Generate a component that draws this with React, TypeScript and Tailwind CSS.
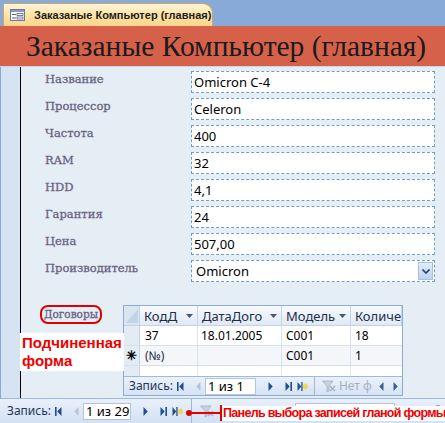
import React from "react";

const fields = [
  { label: "Название", value: "Omicron C-4" },
  { label: "Процессор", value: "Celeron" },
  { label: "Частота", value: "400" },
  { label: "RAM", value: "32" },
  { label: "HDD", value: "4,1" },
  { label: "Гарантия", value: "24" },
  { label: "Цена", value: "507,00" },
];

const cols = [
  { title: "КодД", w: "w-[58px]" },
  { title: "ДатаДого", w: "w-[84px]" },
  { title: "Модель", w: "w-[69px]" },
  { title: "Количе", w: "w-[51px]", noArrow: true },
];

const labelFont = { fontFamily: '"DejaVu Serif", "Liberation Serif", serif' };

function FormIcon() {
  return (
    <svg width="15" height="12" viewBox="0 0 15 12">
      <rect x="0.5" y="0.5" width="14" height="11" fill="#fff" stroke="#6a76a3" />
      <rect x="1" y="1" width="13" height="2" fill="#8e97c4" />
      <rect x="2" y="5" width="4" height="1" fill="#55608f" />
      <rect x="7" y="4.5" width="6" height="2" fill="#fff" stroke="#55608f" strokeWidth="0.8" />
      <rect x="2" y="8.5" width="4" height="1" fill="#55608f" />
      <rect x="7" y="8" width="6" height="2" fill="#fff" stroke="#55608f" strokeWidth="0.8" />
    </svg>
  );
}

function First() {
  return (
    <svg width="7" height="9" viewBox="0 0 7 9">
      <rect x="0" y="0" width="1.6" height="9" fill="#1f4f93" />
      <polygon points="6.5,0 2.2,4.5 6.5,9" fill="#1f4f93" />
    </svg>
  );
}

function Prev({ c = "#b7c4d6" }: { c?: string }) {
  return (
    <svg width="5" height="9" viewBox="0 0 5 9">
      <polygon points="4.5,0 0.3,4.5 4.5,9" fill={c} />
    </svg>
  );
}

function Next({ c = "#1f4f93" }: { c?: string }) {
  return (
    <svg width="5" height="9" viewBox="0 0 5 9">
      <polygon points="0.5,0 4.7,4.5 0.5,9" fill={c} />
    </svg>
  );
}

function Last() {
  return (
    <svg width="7" height="9" viewBox="0 0 7 9">
      <polygon points="0.5,0 4.7,4.5 0.5,9" fill="#1f4f93" />
      <rect x="5.4" y="0" width="1.6" height="9" fill="#1f4f93" />
    </svg>
  );
}

function NewRec() {
  return (
    <svg width="11" height="9" viewBox="0 0 11 9">
      <polygon points="0.5,0 4.3,4.5 0.5,9" fill="#1f4f93" />
      <rect x="4.3" y="0" width="1.3" height="9" fill="#1f4f93" />
      <rect x="6.5" y="2.5" width="4" height="4" fill="#f2c230" />
      <rect x="7.5" y="1.5" width="2" height="6" fill="#f7d55c" />
      <rect x="5.8" y="3.5" width="5.2" height="2" fill="#f7d55c" />
    </svg>
  );
}

function Funnel() {
  return (
    <svg width="15" height="13" viewBox="0 0 15 13">
      <polygon points="0.5,1 11,1 7,6 7,11 5,12 5,6" fill="#c8d2de" stroke="#a3afbf" strokeWidth="0.8" />
      <path d="M8 6 L13 11 M13 6 L8 11" stroke="#a9b3c2" strokeWidth="1.6" />
    </svg>
  );
}

function HeadArrow() {
  return (
    <svg width="7" height="4" viewBox="0 0 7 4" className="shrink-0">
      <polygon points="0,0 7,0 3.5,4" fill="#4b5870" />
    </svg>
  );
}

function NavBar({ text, boxW }: { text: string; boxW: string }) {
  return (
    <div className="flex items-center text-[12px] leading-none text-[#26385a] whitespace-nowrap shrink-0">
      <span className="mr-[4px]">Запись:</span>
      <First />
      <span className="ml-[12px] mr-[4px]">
        <Prev />
      </span>
      <div className={`${boxW} h-[17px] bg-white border border-[#b3c5dc] flex items-center pl-[2px] text-[13px] text-black`}>
        {text}
      </div>
      <span className="ml-[12px]">
        <Next />
      </span>
      <span className="ml-[12px]">
        <Last />
      </span>
      <span className="ml-[5px]">
        <NewRec />
      </span>
    </div>
  );
}

export default function App() {
  return (
    <div
      className="relative w-[445px] h-[423px] overflow-hidden bg-[#e5edf5] flex flex-col"
      style={{ fontFamily: '"Noto Sans", "Liberation Sans", sans-serif' }}
    >
      {/* tab strip */}
      <div className="h-[26px] bg-[#88aad8] flex items-end pl-[3px] shrink-0">
        <div className="h-[23px] w-[210px] rounded-tr-[10px] rounded-tl-[2px] border border-b-0 border-[#c9a86a] bg-gradient-to-b from-[#fff4d6] via-[#fde3a6] to-[#fbd58a] flex items-center pl-[6px] gap-[9px]">
          <FormIcon />
          <span className="text-[11px] font-bold text-[#1c1c1c] leading-none" style={{ fontFamily: '"Liberation Sans", sans-serif' }}>
            Заказаные Компьютер (главная)
          </span>
        </div>
      </div>

      {/* red header */}
      <div className="h-[41px] bg-[#d6614b] shrink-0 flex items-center pl-[26px] border-b border-[#c9d6e6]">
        <span className="text-[29.5px] leading-none text-[#1a1a1a] pt-[2px] whitespace-nowrap" style={{ fontFamily: '"Liberation Serif", serif' }}>
          Заказаные Компьютер (главная)
        </span>
      </div>

      {/* body */}
      <div className="flex h-[331px] shrink-0">
        <div className="w-[21px] bg-[#d5e3f2] border-l border-[#8aa8d6] border-r border-r-black shrink-0" />
        <div className="flex-1 flex flex-col">
          <div className="pt-[4px] pl-[24px] flex flex-col gap-[5px]">
            {fields.map((f) => (
              <div key={f.label} className="flex h-[22px]">
                <div className="w-[146px] text-[11.5px] text-[#6a6383] leading-none pt-[3px] [-webkit-text-stroke:0.3px_#6a6383]" style={labelFont}>
                  {f.label}
                </div>
                <div className="w-[244px] h-[22px] bg-white border border-dashed border-[#6b9fd1] flex items-center pl-[2px] text-[13px] text-black leading-none">
                  {f.value}
                </div>
              </div>
            ))}
            <div className="flex h-[22px]">
              <div className="w-[146px] text-[11.5px] text-[#6a6383] leading-none pt-[3px] [-webkit-text-stroke:0.3px_#6a6383]" style={labelFont}>
                Производитель
              </div>
              <div className="w-[244px] h-[22px] bg-white border border-dashed border-[#6b9fd1] flex items-center justify-between pl-[4px] pr-[1px] text-[13px] text-black leading-none">
                <span>Omicron</span>
                <div className="w-[15px] h-[18px] bg-gradient-to-b from-[#e2ecfb] to-[#bed2f2] border border-[#a8c0e6] flex items-center justify-center">
                  <svg width="8" height="5" viewBox="0 0 8 5">
                    <path d="M0.5 0.5 L4 4 L7.5 0.5" fill="none" stroke="#2a3f66" strokeWidth="1.6" />
                  </svg>
                </div>
              </div>
            </div>
          </div>

          {/* subform */}
          <div className="mt-[23px] flex pl-[19px]">
            <div className="w-[62px] h-[19px] border-2 border-[#e00000] rounded-[8px] flex items-center justify-center">
              <span className="text-[10.5px] text-[#6a6383] leading-none [-webkit-text-stroke:0.3px_#6a6383]" style={labelFont}>
                Договоры
              </span>
            </div>
            <div className="ml-[21px] w-[280px] h-[91px] border border-[#8eabd7] bg-white flex flex-col">
              <div className="flex h-[20px] border-b border-[#c4d3e8] bg-gradient-to-b from-[#f8fbff] to-[#dfe9f6]">
                <div className="w-[16px] h-full border-r border-[#c4d3e8] bg-[#dae5f2] relative overflow-hidden">
                  <svg width="16" height="19" viewBox="0 0 16 19" className="absolute inset-0">
                    <polygon points="14,3 14,17 2,17" fill="#c2d3e8" />
                  </svg>
                </div>
                {cols.map((c) => (
                  <div
                    key={c.title}
                    className={`${c.w} h-full border-r border-[#c4d3e8] flex items-center justify-between pl-[4px] pr-[4px] overflow-hidden text-[13px] text-[#1f2d45] leading-[18px] whitespace-nowrap`}
                  >
                    <span>{c.title}</span>
                    {!c.noArrow && <HeadArrow />}
                  </div>
                ))}
              </div>
              <div className="flex h-[20px] border-b border-[#d6e0ee] text-[12px] leading-none text-black">
                <div className="w-[16px] h-full border-r border-[#c4d3e8] bg-[#e3ebf5]" />
                <div className="w-[58px] border-r border-[#d6e0ee] flex items-center pl-[5px]">37</div>
                <div className="w-[84px] border-r border-[#d6e0ee] flex items-center pl-[3px]">18.01.2005</div>
                <div className="w-[69px] border-r border-[#d6e0ee] flex items-center pl-[4px]">C001</div>
                <div className="w-[51px] flex items-center pl-[4px]">18</div>
              </div>
              <div className="flex h-[20px] border-b border-[#d6e0ee] text-[12px] leading-none text-black bg-[#f4f6f9]">
                <div className="w-[16px] h-full border-r border-[#c4d3e8] bg-[#e3ebf5] flex items-center justify-center text-[13px] font-bold">
                  ✳
                </div>
                <div className="w-[58px] border-r border-[#d6e0ee] flex items-center pl-[5px] text-[#1d2c4c]">(№)</div>
                <div className="w-[84px] border-r border-[#d6e0ee]" />
                <div className="w-[69px] border-r border-[#d6e0ee] flex items-center pl-[4px]">C001</div>
                <div className="w-[51px] flex items-center pl-[4px]">1</div>
              </div>
              <div className="flex flex-1 bg-white">
                <div className="w-[16px] border-r border-[#c4d3e8] bg-[#e3ebf5]" />
                <div className="w-[58px] border-r border-[#e2e8f0]" />
                <div className="w-[84px] border-r border-[#e2e8f0]" />
                <div className="w-[69px] border-r border-[#e2e8f0]" />
              </div>
              <div className="h-[19px] border-t border-[#9fb9db] bg-gradient-to-b from-[#eaf1fa] to-[#d6e3f4] flex items-center pl-[5px] overflow-hidden">
                <NavBar text="1 из 1" boxW="w-[51px]" />
                <div className="ml-[6px] h-full border-l border-[#9fb9db] flex items-center pl-[7px] gap-[2px] text-[12px] text-[#a7b0bd] leading-none whitespace-nowrap shrink-0">
                  <Funnel />
                  <span>Нет ф</span>
                </div>
                <div className="ml-auto flex items-center gap-[9px] pr-[4px] shrink-0">
                  <Prev c="#3f5d8c" />
                  <Next c="#3f5d8c" />
                </div>
              </div>
            </div>
          </div>
        </div>
      </div>

      {/* bottom nav */}
      <div className="h-[25px] shrink-0 border-t border-[#9fb9db] bg-gradient-to-b from-[#e9f0fa] to-[#d3e1f3] flex items-center pl-[7px]">
        <NavBar text="1 из 29" boxW="w-[48px]" />
        <div className="ml-[8px] h-full border-l border-[#9fb9db] flex items-center pl-[8px]">
          <Funnel />
        </div>
        <div className="ml-[80px] w-[100px] h-[17px] border border-[#b3c5dc] bg-white" />
        <div className="ml-auto mr-[3px] w-[8px] h-[12px] rounded-full border border-[#7d8ea6]" />
      </div>

      {/* annotation: subform */}
      <div className="absolute left-[20px] top-[333px] bg-white px-[2px] py-[1px] text-[15px] font-bold text-[#ee0000] leading-[18px]" style={{ fontFamily: '"Liberation Sans", sans-serif' }}>
        <div>Подчиненная</div>
        <div>форма</div>
      </div>

      {/* annotation: main nav */}
      <div className="absolute left-[186px] top-[405px] flex items-center h-[16px]">
        <div className="w-[6px] h-[6px] rounded-full bg-[#e00000]" />
        <div className="w-[28px] h-[2px] bg-[#e00000]" />
        <div className="w-[2px] h-[16px] bg-[#e00000]" />
        <div
          className="bg-white h-[15px] pl-[1px] pr-[2px] text-[12.5px] font-bold text-[#ee0000] leading-[15px] whitespace-nowrap tracking-[-0.7px]"
          style={{ fontFamily: '"Liberation Sans", sans-serif' }}
        >
          Панель выбора записей гланой формы
        </div>
      </div>
    </div>
  );
}
